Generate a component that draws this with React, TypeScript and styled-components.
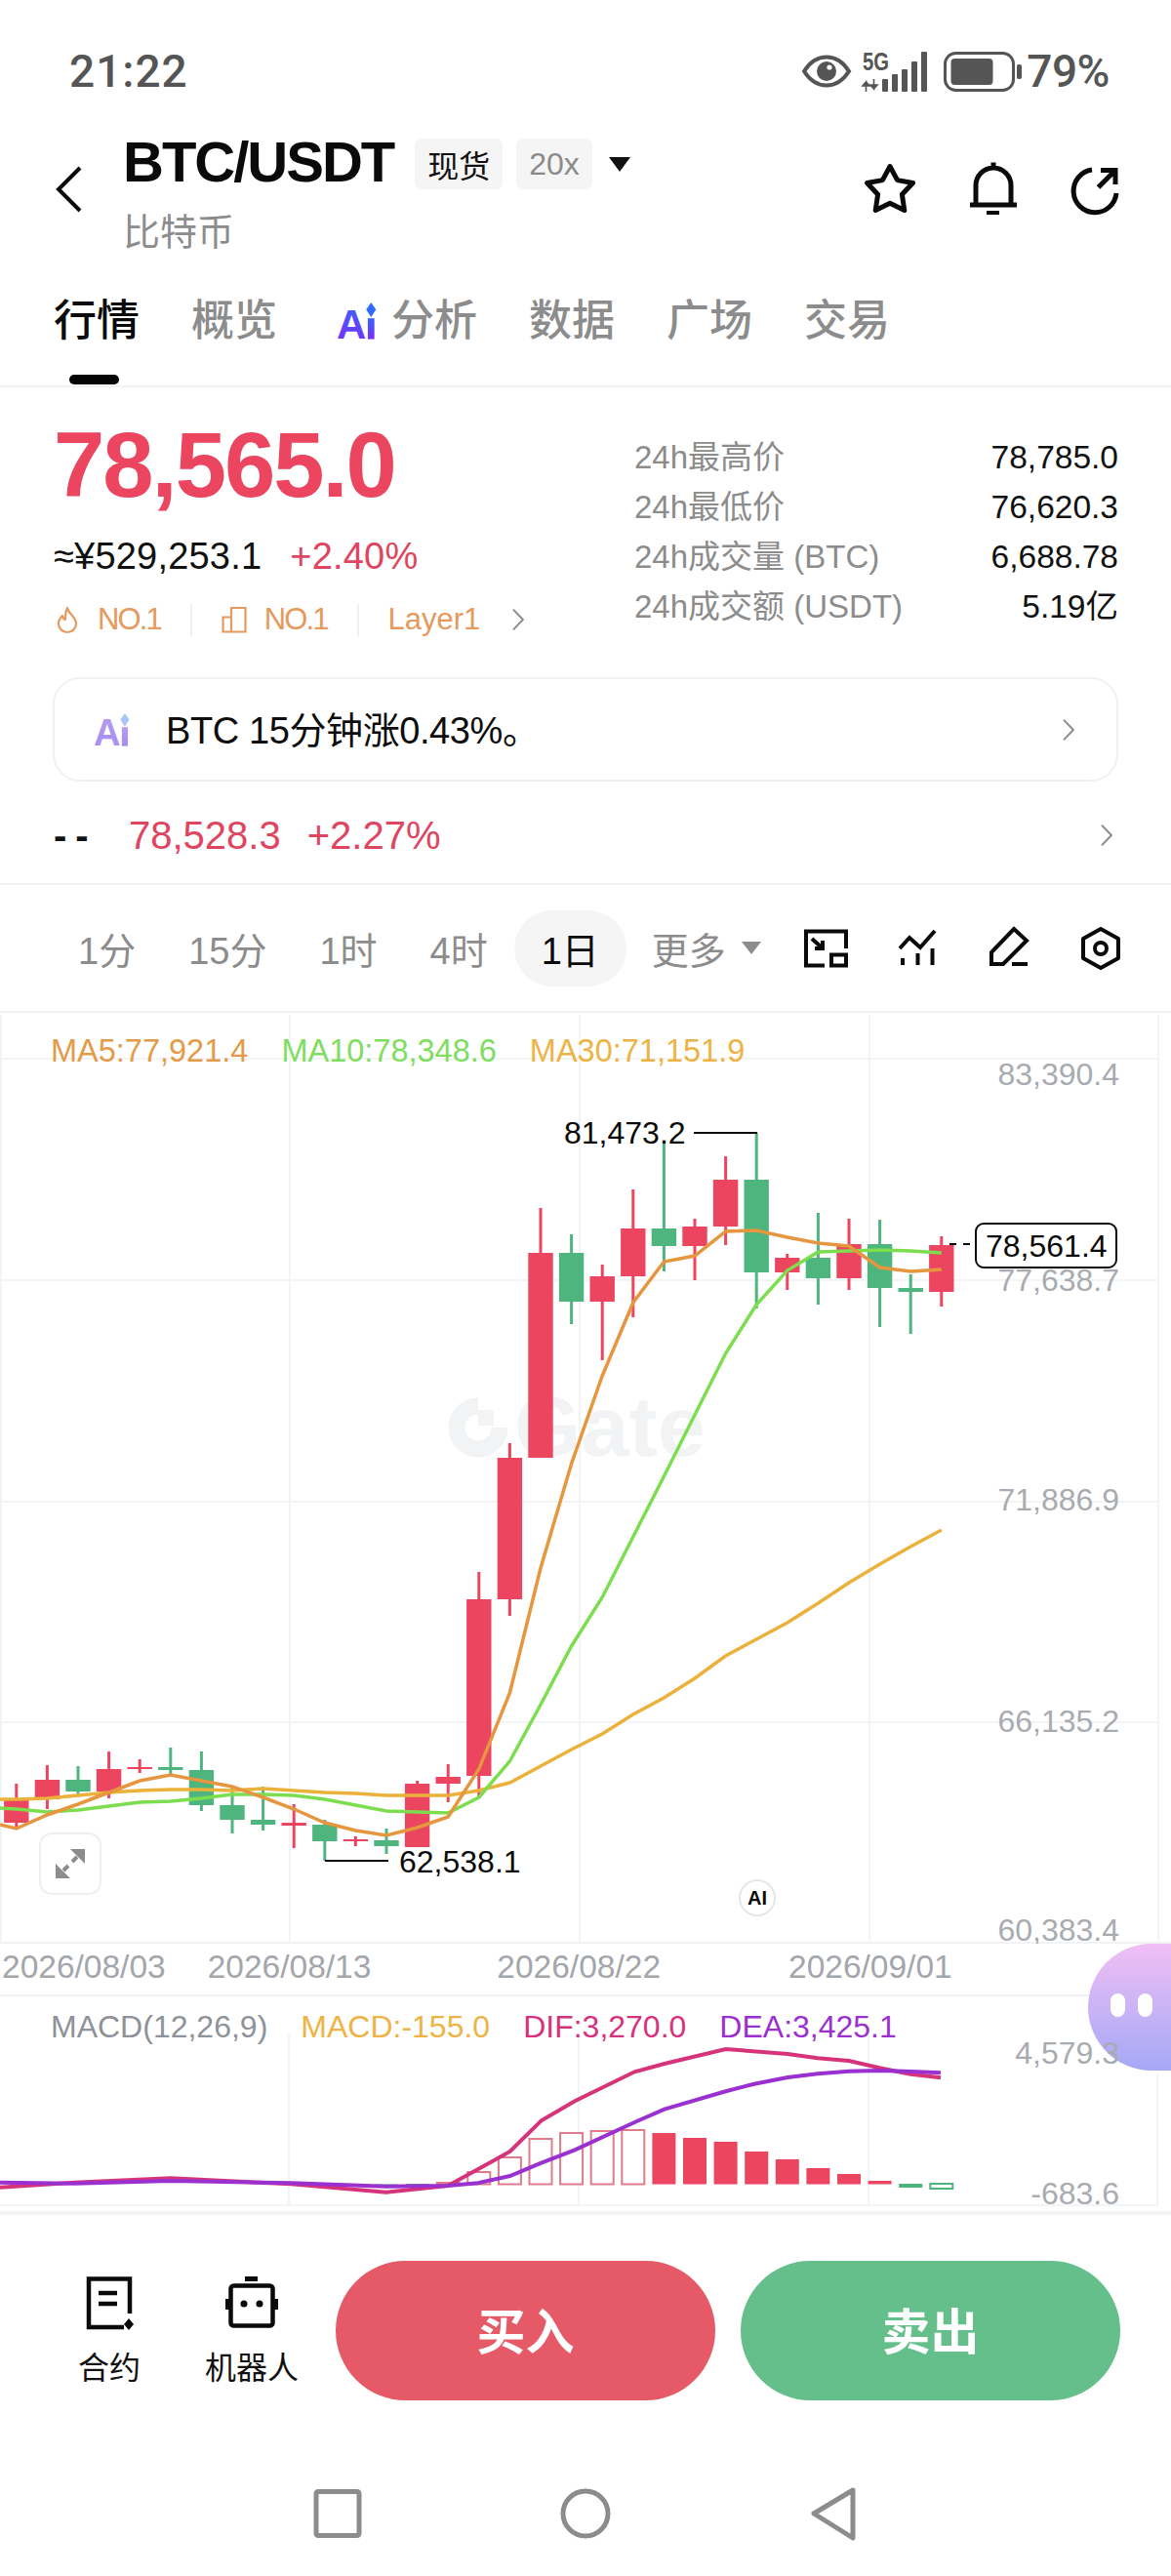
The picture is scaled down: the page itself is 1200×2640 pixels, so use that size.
import React from "react";
import styled, { createGlobalStyle } from "styled-components";

const GlobalStyle = createGlobalStyle`
  html, body { margin: 0; padding: 0; background: #fff; }
  * { box-sizing: border-box; }
`;

const FONT = `"Liberation Sans", "Noto Sans CJK SC", sans-serif`;
const RED = "#EB4560";
const GREEN = "#4EB57F";
const ORANGE = "#E5963F";
const LIME = "#7CDD4E";
const YELLOW = "#EBB13B";
const PINK = "#D5337A";
const PURPLE = "#9B30D0";
const GRID = "#f3f4f5";

const Page = styled.div`
  position: relative;
  width: 1200px;
  height: 2640px;
  overflow: hidden;
  background: #fff;
  font-family: ${FONT};
  color: #111;
`;

/* ---------- status bar ---------- */
const StatusBar = styled.div`
  display: flex;
  align-items: center;
  height: 96px;
  padding: 50px 63px 0 71px;
  color: #555;
  margin-bottom: 34px;
`;
const StatusTime = styled.div`
  font-family: Roboto, ${FONT};
  font-size: 46px;
  font-weight: 500;
  line-height: 46px;
  letter-spacing: 1px;
`;
const StatusRight = styled.div`
  margin-left: auto;
  display: flex;
  align-items: center;
`;
const StatusPercent = styled.div`
  font-family: Roboto, ${FONT};
  font-size: 46px;
  font-weight: 500;
  line-height: 46px;
  margin-left: 5px;
  letter-spacing: -0.5px;
`;
const StatusIcon = styled.svg<{ $mr: number }>`
  display: block;
  overflow: visible;
  margin-right: ${(p) => p.$mr}px;
`;
const SignalText = styled.text`
  font-family: ${FONT};
  font-size: 26px;
  font-weight: 700;
  fill: #555;
`;

/* ---------- header ---------- */
const Header = styled.div`
  display: flex;
  align-items: flex-start;
  height: 135px;
`;
const BackBox = styled.div`
  width: 126px;
  padding: 40px 0 0 57px;
`;
const TitleCol = styled.div`
  padding-top: 12px;
`;
const TitleRow = styled.div`
  display: flex;
  align-items: center;
  height: 52px;
`;
const Title = styled.div`
  font-size: 58px;
  font-weight: 700;
  line-height: 52px;
  letter-spacing: -2px;
  color: #0a0a0a;
  margin-right: 22px;
  margin-top: -4px;
`;
const Tag = styled.div<{ $muted?: boolean }>`
  display: flex;
  align-items: center;
  justify-content: center;
  height: 52px;
  padding: 0 13px;
  margin-right: 14px;
  background: #f5f5f5;
  border-radius: 7px;
  font-size: 32px;
  color: ${(p) => (p.$muted ? "#8b8b8b" : "#111")};
`;
const Caret = styled.div<{ $color: string; $w: number; $h: number }>`
  width: 0;
  height: 0;
  border-left: ${(p) => p.$w / 2}px solid transparent;
  border-right: ${(p) => p.$w / 2}px solid transparent;
  border-top: ${(p) => p.$h}px solid ${(p) => p.$color};
`;
const TitleCaret = styled.div`
  margin-left: 3px;
`;
const SubTitle = styled.div`
  margin-top: 25px;
  font-size: 38px;
  line-height: 38px;
  color: #8c8c8c;
`;
const HeaderActions = styled.div`
  margin-left: auto;
  display: flex;
  gap: 45px;
  padding: 33px 48px 0 0;
`;
const IconSvg = styled.svg`
  display: block;
  overflow: visible;
`;

/* ---------- tabs ---------- */
const Tabs = styled.div`
  display: flex;
  gap: 53px;
  height: 132px;
  padding: 42px 0 0 55px;
  border-bottom: 2px solid #f1f2f3;
`;
const Tab = styled.div<{ $active?: boolean; $ai?: boolean }>`
  position: relative;
  display: flex;
  align-items: center;
  height: 44px;
  gap: 10px;
  margin-left: ${(p) => (p.$ai ? 8 : 0)}px;
  font-size: 44px;
  font-weight: 500;
  line-height: 44px;
  color: ${(p) => (p.$active ? "#0a0a0a" : "#8c8c8c")};
`;
const TabMarker = styled.div`
  position: absolute;
  left: 16px;
  top: 77px;
  width: 51px;
  height: 10px;
  border-radius: 5px;
  background: #050505;
`;
const AiText = styled.text<{ $size: number }>`
  font-family: ${FONT};
  font-size: ${(p) => p.$size}px;
  font-weight: 700;
`;

/* ---------- price ---------- */
const Quote = styled.div`
  display: flex;
  padding: 0 54px 0 55px;
  height: 260px;
`;
const QuoteLeft = styled.div`
  width: 595px;
  padding-top: 33px;
`;
const BigPrice = styled.div`
  font-size: 94px;
  line-height: 94px;
  font-weight: 700;
  letter-spacing: -2px;
  color: ${RED};
`;
const FiatRow = styled.div`
  display: flex;
  align-items: center;
  gap: 29px;
  height: 44px;
  margin-top: 24px;
  font-size: 38px;
  letter-spacing: 0.2px;
`;
const Change = styled.span`
  color: #e0455f;
`;
const RankRow = styled.div`
  display: flex;
  align-items: center;
  height: 44px;
  margin-top: 21px;
  font-size: 31px;
  color: #e59a5e;
`;
const RankText = styled.span<{ $tight?: boolean }>`
  letter-spacing: ${(p) => (p.$tight ? -1.9 : 0)}px;
`;
const RankDivider = styled.div`
  width: 2px;
  height: 33px;
  background: #f2f0ee;
  margin: 0 30px;
`;
const StatList = styled.div`
  flex: 1;
  padding-top: 46px;
`;
const StatRow = styled.div`
  display: flex;
  justify-content: space-between;
  height: 51px;
  line-height: 51px;
  font-size: 33px;
`;
const StatLabel = styled.span`
  color: #8c8c8c;
`;
const StatValue = styled.span`
  font-size: 33.5px;
  color: #111;
`;

const Insight = styled.div`
  display: flex;
  align-items: center;
  height: 107px;
  margin: 37px 54px 0;
  padding: 0 42px 0 40px;
  border: 2px solid #f0f1f2;
  border-radius: 28px;
`;
const InsightText = styled.div`
  margin-left: 30px;
  padding-bottom: 5px;
  font-size: 38px;
  letter-spacing: -0.4px;
  color: #0d0d0d;
`;
const Push = styled.div`
  margin-left: auto;
`;
const SubQuote = styled.div`
  display: flex;
  align-items: center;
  height: 106px;
  padding: 6px 59px 0 55px;
  border-bottom: 2px solid #f1f2f3;
  font-size: 40px;
  color: #e0455f;
`;
const Dash = styled.span`
  color: #111;
  width: 77px;
  font-weight: 700;
  letter-spacing: 9px;
`;
const SubChange = styled.span`
  margin-left: 27px;
`;

/* ---------- time toolbar ---------- */
const Toolbar = styled.div`
  display: flex;
  align-items: center;
  height: 131px;
  padding: 0 42px 0 80px;
  border-bottom: 2px solid #f1f2f3;
  font-size: 38px;
  gap: 54px;
  color: #8c8c8c;
  white-space: nowrap;
`;
const ActiveInterval = styled.div`
  display: flex;
  align-items: center;
  height: 78px;
  margin-left: -27px;
  margin-right: -28px;
  padding: 0 28px;
  border-radius: 39px;
  background: #f5f5f5;
  color: #0a0a0a;
`;
const MoreMenu = styled.div`
  display: flex;
  align-items: center;
  gap: 16px;
`;
const ToolIcons = styled.div`
  margin-left: -18px;
  display: flex;
  gap: 34px;
`;

/* ---------- chart ---------- */
const ChartSection = styled.div`
  position: relative;
`;
const ChartSvg = styled.svg`
  display: block;
`;
const Legend = styled.div<{ $top: number; $size: number; $gap: number }>`
  position: absolute;
  left: 52px;
  top: ${(p) => p.$top}px;
  z-index: 3;
  display: flex;
  gap: ${(p) => p.$gap}px;
  font-size: ${(p) => p.$size}px;
  line-height: 32px;
`;
const LegendItem = styled.span<{ $color: string }>`
  color: ${(p) => p.$color};
`;
const AxisText = styled.text`
  font-family: ${FONT};
  font-size: 32px;
  fill: #a8abaf;
  text-anchor: end;
`;
const NoteText = styled.text`
  font-family: ${FONT};
  font-size: 32px;
  fill: #0a0a0a;
`;
const Watermark = styled.text`
  font-family: ${FONT};
  font-size: 88px;
  font-weight: 700;
  fill: #f2f3f4;
`;
const ExpandButton = styled.div`
  position: absolute;
  left: 40px;
  top: 840px;
  width: 64px;
  height: 64px;
  display: flex;
  align-items: center;
  justify-content: center;
  background: #fff;
  border: 2px solid #efefef;
  border-radius: 13px;
`;
const AiBadge = styled.div`
  position: absolute;
  left: 757px;
  top: 888px;
  width: 38px;
  height: 38px;
  display: flex;
  align-items: center;
  justify-content: center;
  background: #fff;
  border: 2px solid #e6e6e6;
  border-radius: 50%;
  font-size: 20px;
  font-weight: 700;
  color: #0a0a0a;
`;
const DateAxis = styled.div`
  display: flex;
  height: 54px;
  padding: 0 0 4px 2px;
  align-items: center;
  border-bottom: 2px solid #f1f2f3;
  font-size: 33.5px;
  color: #a3a6ab;
`;
const DateLabel = styled.span<{ $ml: number }>`
  margin-left: ${(p) => p.$ml}px;
`;
const MacdSection = styled.div`
  position: relative;
  z-index: 2;
  height: 220px;
`;

/* ---------- bottom ---------- */
const BottomBar = styled.div`
  display: flex;
  align-items: flex-start;
  height: 210px;
  padding: 47px 52px 0 80px;
  border-top: 4px solid #f3f4f5;
`;
const BarTool = styled.div<{ $w: number; $mr: number }>`
  width: ${(p) => p.$w}px;
  margin-right: ${(p) => p.$mr}px;
  padding-top: 16px;
  display: flex;
  flex-direction: column;
  align-items: center;
`;
const BarLabel = styled.div`
  margin-top: 24px;
  font-size: 32px;
  line-height: 32px;
  white-space: nowrap;
  color: #111;
`;
const TradeButton = styled.div<{ $bg: string; $mr?: number }>`
  width: 389px;
  height: 143px;
  margin-right: ${(p) => p.$mr ?? 0}px;
  padding-bottom: 6px;
  display: flex;
  align-items: center;
  justify-content: center;
  border-radius: 72px;
  background: ${(p) => p.$bg};
  color: #fff;
  font-size: 50px;
  font-weight: 700;
`;
const NavBar = styled.div`
  display: flex;
  justify-content: center;
  gap: 194px;
  padding-top: 70px;
`;
const PetBubble = styled.div`
  position: absolute;
  z-index: 1;
  right: 0;
  top: 1992px;
  width: 85px;
  height: 130px;
  display: flex;
  gap: 13px;
  padding: 51px 0 0 23px;
  border-radius: 65px 0 0 65px;
  background: linear-gradient(180deg, #f0bff5 0%, #a5a8f6 100%);
`;
const PetEye = styled.div`
  width: 15px;
  height: 24px;
  border-radius: 8px;
  background: #fff;
`;
const FlameBox = styled.div`
  margin: 0 19px 0 2px;
`;
const BarsBox = styled.div`
  margin-right: 18px;
`;
const RankChevron = styled.div`
  margin-left: 32px;
`;

/* ---------- data ---------- */
const cx = (i: number) => 16.8 + 31.6 * i;
type C = [string, number, number, number, number];
const R = RED;
const G = GREEN;
const CANDLES: C[] = [
  [R, 1828, 1845, 1868, 1875], [R, 1809, 1824, 1844, 1854], [G, 1810, 1824, 1836, 1840],
  [R, 1795, 1813, 1836, 1843], [R, 1803, 1811, 1813, 1817], [G, 1791, 1811, 1814, 1819],
  [G, 1795, 1814, 1850, 1856], [G, 1832, 1850, 1865, 1879], [G, 1831, 1865, 1870, 1876],
  [R, 1849, 1868, 1871, 1894], [G, 1865, 1870, 1887, 1907], [R, 1882, 1885, 1887, 1892],
  [G, 1874, 1886, 1892, 1900], [R, 1825, 1828, 1893, 1893], [R, 1808, 1821, 1828, 1847],
  [R, 1611, 1639, 1820, 1843], [R, 1479, 1494, 1639, 1656], [R, 1238, 1284, 1494, 1494],
  [G, 1265, 1284, 1334, 1357], [R, 1296, 1308, 1334, 1394], [R, 1219, 1259, 1308, 1350],
  [G, 1170, 1259, 1277, 1303], [R, 1249, 1257, 1277, 1312], [R, 1185, 1209, 1257, 1276],
  [G, 1161, 1209, 1304, 1341], [R, 1285, 1289, 1304, 1322], [G, 1243, 1289, 1310, 1337],
  [R, 1249, 1275, 1310, 1322], [G, 1250, 1275, 1320, 1360], [G, 1306, 1320, 1324, 1367],
  [R, 1267, 1276, 1324, 1339],
];
const MA5 = [1874, 1860, 1849, 1837, 1825, 1819, 1825, 1831, 1842, 1854, 1868, 1876, 1881, 1873, 1862, 1813, 1735, 1607, 1500, 1410, 1335, 1293, 1287, 1262, 1261, 1268, 1274, 1277, 1299, 1303, 1301];
const MA10 = [1854, 1857, 1855, 1851, 1847, 1846, 1843, 1839, 1839, 1840, 1844, 1850, 1856, 1857, 1858, 1842, 1805, 1747, 1687, 1637, 1575, 1513, 1450, 1387, 1337, 1302, 1283, 1282, 1281, 1282, 1284];
const MA30 = [1844, 1843, 1840, 1837, 1835, 1834, 1834, 1835, 1833, 1835, 1837, 1838, 1840, 1840, 1840, 1835, 1827, 1810, 1793, 1777, 1757, 1740, 1720, 1697, 1680, 1663, 1643, 1622, 1603, 1585, 1568];
const line = (ys: number[], x0?: number, y0?: number) =>
  (x0 !== undefined ? `${x0},${y0} ` : "") + ys.map((y, i) => `${cx(i).toFixed(1)},${y}`).join(" ");

const mz = (pts: [number, number][]) =>
  pts.map(([x, v]) => `${(x / 1.307).toFixed(1)},${(2020 + v / 3).toFixed(1)}`).join(" ");
const DIF = mz([[0, 665], [100, 650], [228, 637], [390, 655], [517, 680], [600, 660], [683, 555], [725, 460], [770, 400], [850, 310], [890, 285], [972, 240], [1055, 255], [1095, 268], [1137, 276], [1178, 298], [1220, 317], [1260, 328]]);
const DEA = mz([[0, 650], [100, 653], [228, 645], [390, 652], [517, 662], [600, 660], [640, 652], [683, 630], [725, 590], [770, 550], [850, 465], [890, 425], [972, 370], [1010, 347], [1055, 327], [1095, 316], [1137, 308], [1178, 306], [1220, 309], [1260, 313]]);
const ZERO = 2238.5;
const SOLID_RED: [number, number][] = [[21, 2186], [22, 2191], [23, 2195], [24, 2205], [25, 2213], [26, 2222], [27, 2228], [28, 2235]];
const HOLLOW_RED: [number, number][] = [[14, 2237], [15, 2226], [16, 2211], [17, 2192], [18, 2186], [19, 2184], [20, 2183]];

const H_LINES = [1085, 1312, 1539, 1765];
const V_LINES = [1, 297, 594, 891, 1187];

/* ---------- icons ---------- */
const Eye = () => (
  <StatusIcon width="50" height="34" viewBox="0 0 50 34" $mr={12}>
    <path d="M2 17C9 6 17 2.5 25 2.5S41 6 48 17C41 28 33 31.5 25 31.5S9 28 2 17Z" fill="none" stroke="#555" strokeWidth="4" />
    <circle cx="25" cy="17" r="10" fill="#555" />
    <circle cx="28" cy="13" r="2.6" fill="#fff" />
  </StatusIcon>
);
const Signal = () => (
  <StatusIcon width="67" height="41" viewBox="0 0 67 41" $mr={16}>
    <SignalText x="0" y="19" textLength="27" lengthAdjust="spacingAndGlyphs">5G</SignalText>
    <path d="M3.5 41V31L0 35H7L3.5 31M11.5 28V38L8 34H15L11.5 38" fill="#555" stroke="#555" strokeWidth="1.6" />
    <rect x="20" y="28" width="6" height="13" rx="1" fill="#555" />
    <rect x="30" y="23" width="6" height="18" rx="1" fill="#555" />
    <rect x="40" y="18" width="6" height="23" rx="1" fill="#555" />
    <rect x="50" y="10" width="6" height="31" rx="1" fill="#555" />
    <rect x="60" y="0" width="6" height="41" rx="1" fill="#555" />
  </StatusIcon>
);
const Battery = () => (
  <StatusIcon width="80" height="41" viewBox="0 0 80 41" $mr={0}>
    <rect x="1.5" y="1.5" width="70" height="38" rx="11" fill="none" stroke="#555" strokeWidth="3" />
    <rect x="7.5" y="7" width="43" height="27" rx="4" fill="#555" />
    <rect x="75" y="13" width="5" height="15" rx="2" fill="#555" />
  </StatusIcon>
);
const AiMark = ({ id, w, h, size, top, bottom, star }: { id: string; w: number; h: number; size: number; top: string; bottom: string; star: string }) => (
  <IconSvg width={w} height={h} viewBox={`0 0 ${w} ${h}`}>
    <defs>
      <linearGradient id={id} x1="0" y1="0" x2="0" y2="1">
        <stop offset="0" stopColor={top} />
        <stop offset="1" stopColor={bottom} />
      </linearGradient>
    </defs>
    <AiText $size={size} x="0" y={h - 1} fill={`url(#${id})`}>A</AiText>
    <rect x={size * 0.76} y={h - size * 0.52} width={size * 0.16} height={size * 0.51} fill={`url(#${id})`} />
    <path d={`M${size * 0.84} 0 L${size * 0.96} ${size * 0.17} L${size * 0.84} ${size * 0.36} L${size * 0.72} ${size * 0.17}Z`} fill={star} />
  </IconSvg>
);
const Chevron = ({ h = 24, color = "#8c8c8c" }: { h?: number; color?: string }) => (
  <IconSvg width={h * 0.58} height={h} viewBox="0 0 14 24">
    <path d="M2 1.5L12 12L2 22.5" fill="none" stroke={color} strokeWidth="2" strokeLinejoin="round" />
  </IconSvg>
);

export default function App() {
  return (
    <Page>
      <GlobalStyle />
      <StatusBar>
        <StatusTime>21:22</StatusTime>
        <StatusRight>
          <Eye />
          <Signal />
          <Battery />
          <StatusPercent>79%</StatusPercent>
        </StatusRight>
      </StatusBar>

      <Header>
        <BackBox>
          <IconSvg width="28" height="48" viewBox="0 0 28 48">
            <path d="M25 2L3 24L25 46" fill="none" stroke="#0a0a0a" strokeWidth="4" />
          </IconSvg>
        </BackBox>
        <TitleCol>
          <TitleRow>
            <Title>BTC/USDT</Title>
            <Tag>现货</Tag>
            <Tag $muted>20x</Tag>
            <TitleCaret><Caret $color="#111" $w={22} $h={15} /></TitleCaret>
          </TitleRow>
          <SubTitle>比特币</SubTitle>
        </TitleCol>
        <HeaderActions>
          <IconSvg width="60" height="60" viewBox="0 0 60 60">
            <path d="M30 7.5L37.6 21.6L53.5 24.5L42.4 36.2L44.8 52.5L30 45.3L15.2 52.5L17.6 36.2L6.5 24.5L22.4 21.6Z" fill="none" stroke="#0a0a0a" strokeWidth="5" strokeLinejoin="round" />
          </IconSvg>
          <IconSvg width="60" height="60" viewBox="0 0 60 60">
            <path d="M13 47V27A18 18 0 0 1 49 27V47M7 47H55M31 3.5V9" fill="none" stroke="#0a0a0a" strokeWidth="5" />
            <rect x="24" y="53" width="13" height="4" fill="#0a0a0a" />
          </IconSvg>
          <IconSvg width="60" height="60" viewBox="0 0 60 60">
            <path d="M27 11A22 22 0 1 0 52 35M33.5 29L50 12.5M36 11.5H51V26" fill="none" stroke="#0a0a0a" strokeWidth="5" />
          </IconSvg>
        </HeaderActions>
      </Header>

      <Tabs>
        <Tab $active>
          行情
          <TabMarker />
        </Tab>
        <Tab>概览</Tab>
        <Tab $ai>
          <AiMark id="aiTab" w={46} h={38} size={42} top="#3a63ff" bottom="#7b2df2" star="#2f6bff" />
          分析
        </Tab>
        <Tab>数据</Tab>
        <Tab>广场</Tab>
        <Tab>交易</Tab>
      </Tabs>

      <Quote>
        <QuoteLeft>
          <BigPrice>78,565.0</BigPrice>
          <FiatRow>
            <span>≈¥529,253.1</span>
            <Change>+2.40%</Change>
          </FiatRow>
          <RankRow>
            <FlameBox>
              <IconSvg width="24" height="28" viewBox="0 0 24 28">
                <path d="M12 2C13 8 21 11 21 18A9 9 0 0 1 3 18C3 14 5 12 7 10C7.5 12.5 8.5 13.5 10 14C10 10 10 6 12 2Z" fill="none" stroke="#e59a5e" strokeWidth="2.2" strokeLinejoin="round" />
              </IconSvg>
            </FlameBox>
            <RankText $tight>NO.1</RankText>
            <RankDivider />
            <BarsBox>
              <IconSvg width="26" height="28" viewBox="0 0 26 28">
                <path d="M1.5 26.5V11.5H10V26.5ZM10 26.5V2H24.5V26.5Z" fill="none" stroke="#e59a5e" strokeWidth="2.2" />
              </IconSvg>
            </BarsBox>
            <RankText $tight>NO.1</RankText>
            <RankDivider />
            <span>Layer1</span>
            <RankChevron><Chevron /></RankChevron>
          </RankRow>
        </QuoteLeft>
        <StatList>
          <StatRow><StatLabel>24h最高价</StatLabel><StatValue>78,785.0</StatValue></StatRow>
          <StatRow><StatLabel>24h最低价</StatLabel><StatValue>76,620.3</StatValue></StatRow>
          <StatRow><StatLabel>24h成交量 (BTC)</StatLabel><StatValue>6,688.78</StatValue></StatRow>
          <StatRow><StatLabel>24h成交额 (USDT)</StatLabel><StatValue>5.19亿</StatValue></StatRow>
        </StatList>
      </Quote>

      <Insight>
        <AiMark id="aiCard" w={44} h={34} size={38} top="#b59cf3" bottom="#a58cf0" star="#a9c4f7" />
        <InsightText>BTC 15分钟涨0.43%。</InsightText>
        <Push><Chevron /></Push>
      </Insight>

      <SubQuote>
        <Dash>--</Dash>
        <span>78,528.3</span>
        <SubChange>+2.27%</SubChange>
        <Push><Chevron /></Push>
      </SubQuote>

      <Toolbar>
        <span>1分</span>
        <span>15分</span>
        <span>1时</span>
        <span>4时</span>
        <ActiveInterval>1日</ActiveInterval>
        <MoreMenu>
          更多
          <Caret $color="#8c8c8c" $w={20} $h={13} />
        </MoreMenu>
        <ToolIcons>
          <IconSvg width="60" height="60" viewBox="0 0 60 60">
            <path d="M51 30V12.5H10V47.5H29M36 36.5H51V47.5H36ZM16 20L27 30M27 22V30H19" fill="none" stroke="#0a0a0a" strokeWidth="4" />
          </IconSvg>
          <IconSvg width="60" height="60" viewBox="0 0 60 60">
            <path d="M12 30L22 19L33 29L48 12M15 40V47M30.5 35V47M45.5 30V47" fill="none" stroke="#0a0a0a" strokeWidth="4" />
          </IconSvg>
          <IconSvg width="60" height="60" viewBox="0 0 60 60">
            <path d="M35 10L48 22L24 46H12V34ZM33 46H49" fill="none" stroke="#0a0a0a" strokeWidth="4" />
          </IconSvg>
          <IconSvg width="60" height="60" viewBox="0 0 60 60">
            <path d="M30 10L48 20V40L30 50L12 40V20Z" fill="none" stroke="#0a0a0a" strokeWidth="4" strokeLinejoin="round" />
            <circle cx="30" cy="30" r="6" fill="none" stroke="#0a0a0a" strokeWidth="4" />
          </IconSvg>
        </ToolIcons>
      </Toolbar>

      <ChartSection>
        <Legend $top={23} $size={32.5} $gap={34}>
          <LegendItem $color="#E39B4A">MA5:77,921.4</LegendItem>
          <LegendItem $color="#7FDD5F">MA10:78,348.6</LegendItem>
          <LegendItem $color="#ECB445">MA30:71,151.9</LegendItem>
        </Legend>
        <ChartSvg width="1200" height="954" viewBox="0 1038 1200 954">
          {H_LINES.map((y) => (
            <line key={y} x1="0" x2="1187" y1={y} y2={y} stroke={GRID} strokeWidth="2" />
          ))}
          <line x1="0" x2="1200" y1="1991" y2="1991" stroke="#f1f2f3" strokeWidth="2" />
          {V_LINES.map((x) => (
            <line key={x} x1={x} x2={x} y1="1040" y2="1992" stroke={GRID} strokeWidth="2" />
          ))}
          <g>
            <path d="M512 1463A22 22 0 1 1 490 1441" fill="none" stroke="#f2f3f4" strokeWidth="17" />
            <rect x="490" y="1445" width="16" height="16" fill="#f2f3f4" />
            <Watermark x="527" y="1492">Gate</Watermark>
          </g>
          {CANDLES.map(([c, hi, top, bot, lo], i) => (
            <g key={i} fill={c}>
              <rect x={cx(i) - 1.5} y={hi} width="3" height={lo - hi} />
              <rect x={cx(i) - 12.7} y={top} width="25.4" height={bot - top} />
            </g>
          ))}
          <polyline points={line(MA30, 0, 1844)} fill="none" stroke={YELLOW} strokeWidth="3.5" />
          <polyline points={line(MA10, 0, 1853)} fill="none" stroke={LIME} strokeWidth="3.5" />
          <polyline points={line(MA5, 0, 1870)} fill="none" stroke={ORANGE} strokeWidth="3.5" />
          <AxisText x="1147" y="1112">83,390.4</AxisText>
          <AxisText x="1147" y="1323">77,638.7</AxisText>
          <AxisText x="1147" y="1548">71,886.9</AxisText>
          <AxisText x="1147" y="1775">66,135.2</AxisText>
          <AxisText x="1147" y="1989">60,383.4</AxisText>
          <NoteText x="578" y="1172">81,473.2</NoteText>
          <line x1="711" x2="776" y1="1161" y2="1161" stroke="#0a0a0a" strokeWidth="2" />
          <line x1="333" x2="398" y1="1907" y2="1907" stroke="#0a0a0a" strokeWidth="2" />
          <NoteText x="409" y="1919">62,538.1</NoteText>
          <line x1="973" x2="998" y1="1275" y2="1275" stroke="#0a0a0a" strokeWidth="2" strokeDasharray="7 7" />
          <rect x="1000" y="1254" width="144" height="45" rx="8" fill="#fff" stroke="#0a0a0a" strokeWidth="2" />
          <NoteText x="1010" y="1288">78,561.4</NoteText>
        </ChartSvg>
        <ExpandButton>
          <IconSvg width="30" height="30" viewBox="0 0 30 30">
            <path d="M30 0V15L15 0ZM0 30V15L15 30Z" fill="#8c8c8c" />
            <path d="M22 8L17 13M8 22L13 17" stroke="#8c8c8c" strokeWidth="4" />
          </IconSvg>
        </ExpandButton>
        <AiBadge>AI</AiBadge>
        <DateAxis>
          <DateLabel $ml={0}>2026/08/03</DateLabel>
          <DateLabel $ml={43}>2026/08/13</DateLabel>
          <DateLabel $ml={129}>2026/08/22</DateLabel>
          <DateLabel $ml={131}>2026/09/01</DateLabel>
        </DateAxis>
      </ChartSection>

      <MacdSection>
        <Legend $top={15} $size={32} $gap={34}>
          <LegendItem $color="#8E9299">MACD(12,26,9)</LegendItem>
          <LegendItem $color="#EDB445">MACD:-155.0</LegendItem>
          <LegendItem $color="#D6337E">DIF:3,270.0</LegendItem>
          <LegendItem $color="#9B30D0">DEA:3,425.1</LegendItem>
        </Legend>
        <ChartSvg width="1200" height="220" viewBox="0 2046 1200 220">
          {[296, 593, 890].map((x) => (
            <line key={x} x1={x} x2={x} y1="2085" y2="2260" stroke={GRID} strokeWidth="2" />
          ))}
          <line x1="1186" x2="1186" y1="2125" y2="2260" stroke={GRID} strokeWidth="2" />
          <line x1="0" x2="1186" y1="2260" y2="2260" stroke={GRID} strokeWidth="2" />
          {HOLLOW_RED.map(([i, top]) => (
            <rect key={i} x={cx(i) - 11.5} y={top} width="23" height={ZERO - top} fill="#fff" stroke="#DE7C8C" strokeWidth="2" />
          ))}
          {SOLID_RED.map(([i, top]) => (
            <rect key={i} x={cx(i) - 12} y={top} width="24" height={ZERO - top} fill={RED} />
          ))}
          <rect x={cx(12) - 12} y="2238" width="24" height="4" fill="#A8D9C6" />
          <rect x={cx(13) - 12} y="2238" width="24" height="3" fill={GREEN} />
          <rect x={cx(29) - 12} y="2238" width="24" height="4" fill={GREEN} />
          <rect x={cx(30) - 11.5} y="2238" width="23" height="5" fill="#fff" stroke={GREEN} strokeWidth="2" />
          <polyline points={DIF} fill="none" stroke={PINK} strokeWidth="4" />
          <polyline points={DEA} fill="none" stroke={PURPLE} strokeWidth="4" />
          <AxisText x="1147" y="2115">4,579.3</AxisText>
          <AxisText x="1147" y="2259">-683.6</AxisText>
        </ChartSvg>
      </MacdSection>

      <BottomBar>
        <BarTool $w={64} $mr={66}>
          <IconSvg width="54" height="54" viewBox="0 0 54 54">
            <path d="M48 38V2.5H6V52H42M16 17H35M16 28H35" fill="none" stroke="#0a0a0a" strokeWidth="4.5" />
            <path d="M47 43L52 49L47 55L42 49Z" fill="#0a0a0a" />
          </IconSvg>
          <BarLabel>合约</BarLabel>
        </BarTool>
        <BarTool $w={96} $mr={38}>
          <IconSvg width="54" height="54" viewBox="0 0 54 54">
            <rect x="20" y="0" width="13" height="5" fill="#0a0a0a" />
            <rect x="5.5" y="9.5" width="43" height="41" rx="3" fill="none" stroke="#0a0a0a" strokeWidth="4.5" />
            <rect x="0" y="23" width="4" height="11" fill="#0a0a0a" />
            <rect x="50" y="23" width="4" height="11" fill="#0a0a0a" />
            <circle cx="19" cy="28" r="3.5" fill="#0a0a0a" />
            <circle cx="35" cy="28" r="3.5" fill="#0a0a0a" />
          </IconSvg>
          <BarLabel>机器人</BarLabel>
        </BarTool>
        <TradeButton $bg="#E65A67" $mr={26}>买入</TradeButton>
        <TradeButton $bg="#64BF8B">卖出</TradeButton>
      </BottomBar>

      <NavBar>
        <IconSvg width="60" height="60" viewBox="0 0 60 60">
          <rect x="8" y="7.5" width="44" height="45" rx="2" fill="none" stroke="#8c8c8c" strokeWidth="5" />
        </IconSvg>
        <IconSvg width="60" height="60" viewBox="0 0 60 60">
          <circle cx="30" cy="30" r="23" fill="none" stroke="#8c8c8c" strokeWidth="5" />
        </IconSvg>
        <IconSvg width="60" height="60" viewBox="0 0 60 60">
          <path d="M50 6L10 30L50 55Z" fill="none" stroke="#8c8c8c" strokeWidth="5" strokeLinejoin="round" />
        </IconSvg>
      </NavBar>

      <PetBubble>
        <PetEye />
        <PetEye />
      </PetBubble>
    </Page>
  );
}
